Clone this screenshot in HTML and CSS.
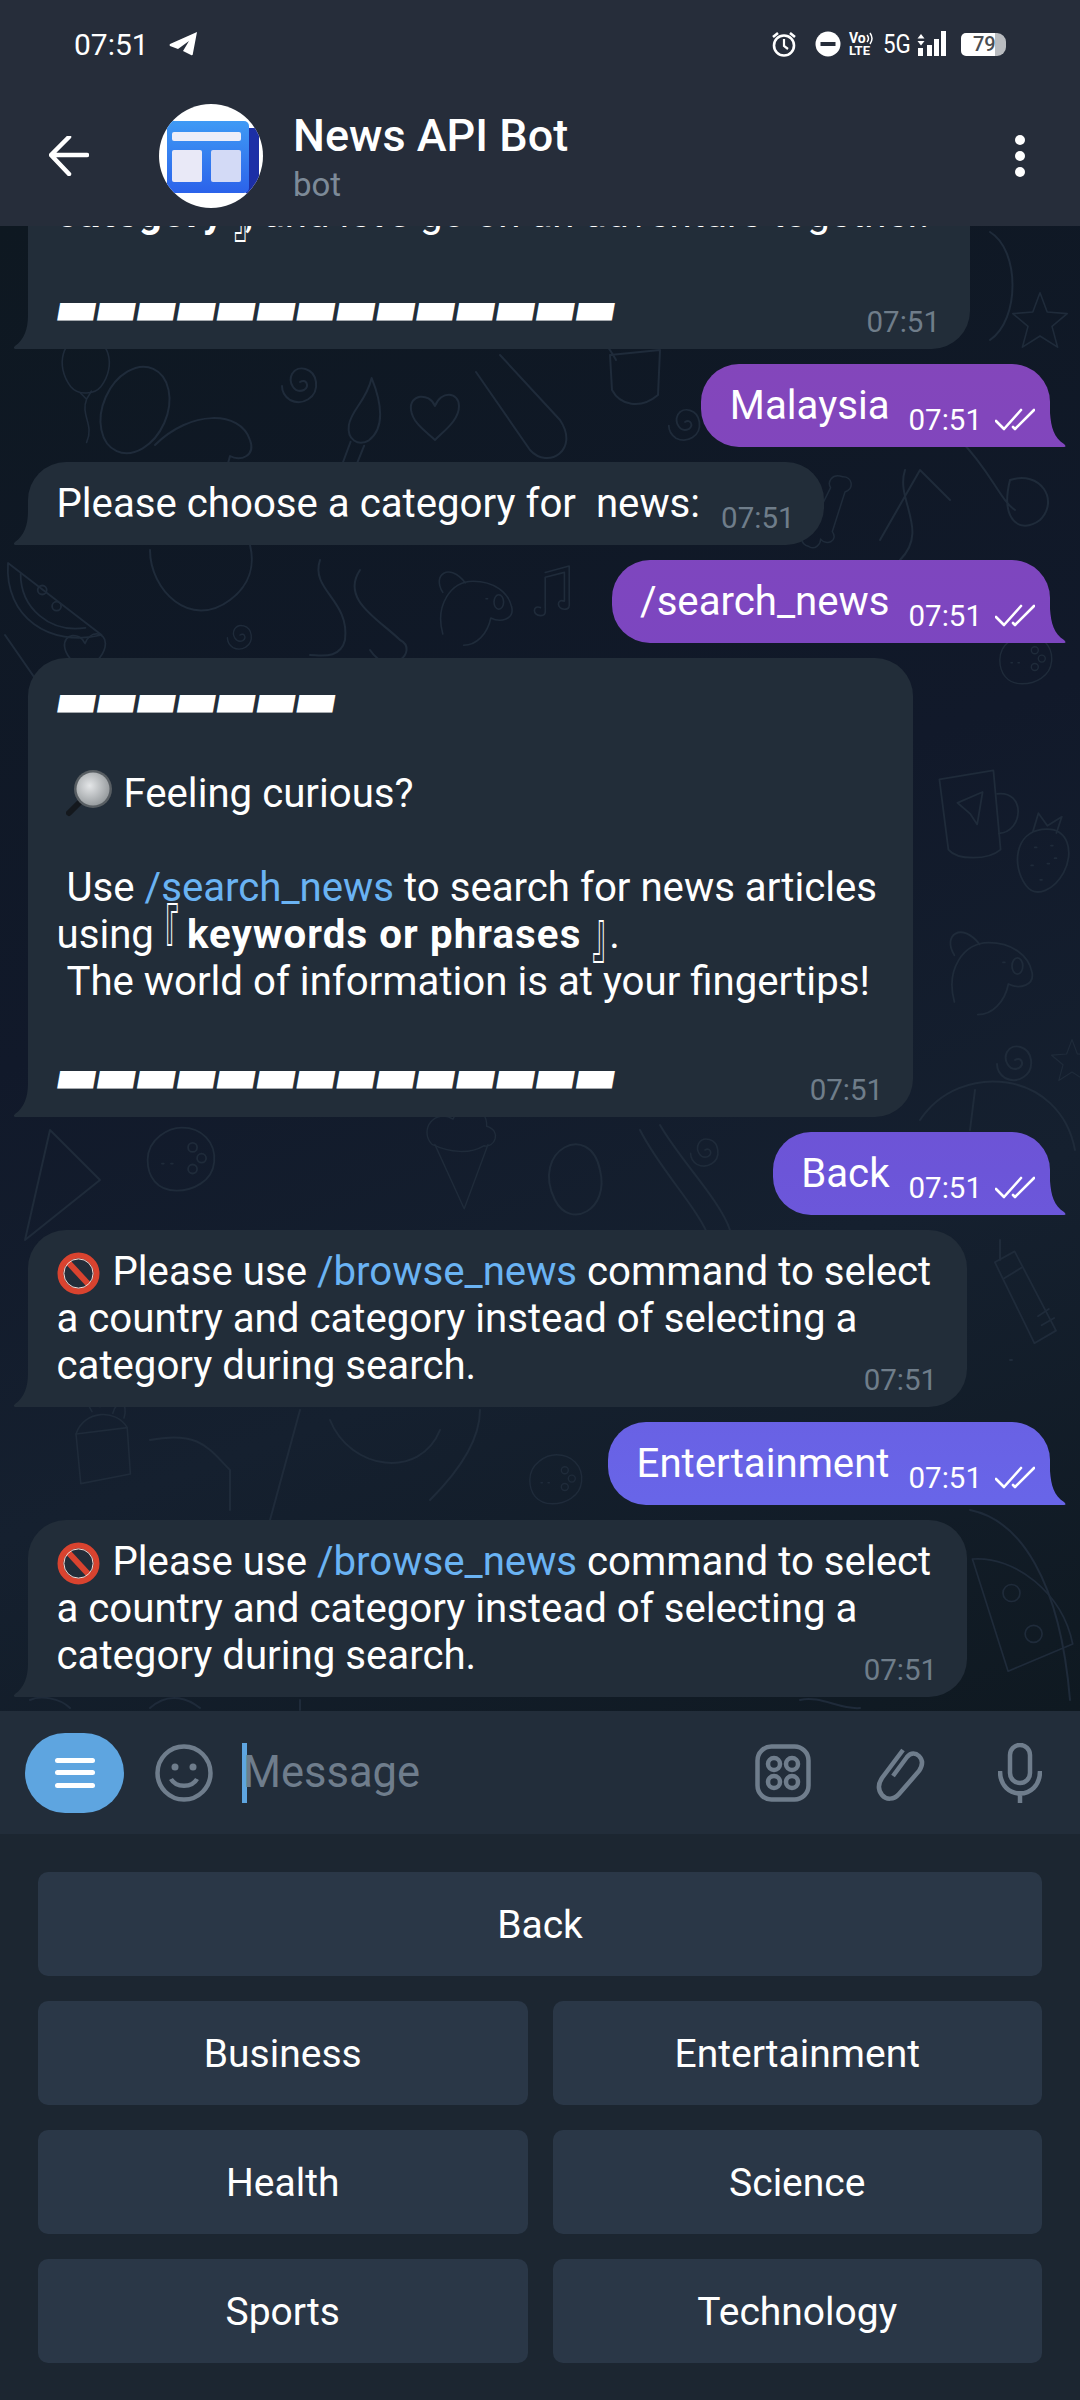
FILE: index.html
```html
<!DOCTYPE html>
<html lang="en">
<head>
    <meta charset="utf-8">
    <title>News API Bot</title>
    <link rel="stylesheet" href="styles.css">
</head>
<body>
<svg class="defs" width="0" height="0">
    <defs>
        <symbol id="ban" viewBox="0 0 43 43">
            <circle cx="21.5" cy="21.5" r="18" fill="none" stroke="#d9432f" stroke-width="6"/>
            <path d="M9 8 L34 35" stroke="#d9432f" stroke-width="6"/>
            <circle cx="21.5" cy="21.5" r="14.6" fill="none" stroke="#f3dcd6" stroke-width="1"/>
        </symbol>
        <symbol id="checks" viewBox="0 0 40 23">
            <path d="M1 13 L9 21 L26 2 M18 19 L20 21 L39 2" fill="none" stroke="#fff" stroke-width="2.6" stroke-linecap="round" stroke-linejoin="round"/>
        </symbol>
    </defs>
</svg>

<div class="app">
    <header class="topbar">
        <div class="status">
            <div class="status-left">
                <span class="clock">07:51</span>
                <svg class="plane" width="28" height="24" viewBox="0 0 28 24"><path d="M28 0 L1 12 Q0 13 1 14 L9 17 L20 9 L14 19 L22 23 Q24 24 24 21 Z" fill="#fff"/></svg>
            </div>
            <div class="status-right">
                <svg width="26" height="26" viewBox="0 0 26 26"><circle cx="13" cy="14.500" r="10" fill="none" stroke="#fff" stroke-width="2.600"/><path d="M13 8 V15 L17 18" fill="none" stroke="#fff" stroke-width="2.200"/><path d="M2 6 L7 2 M24 6 L19 2" stroke="#fff" stroke-width="2.600"/></svg>
                <svg class="dnd" width="26" height="26" viewBox="0 0 26 26"><circle cx="13" cy="13" r="12.500" fill="#fff"/><rect x="5.500" y="11" width="15" height="4" fill="#262d3a"/></svg>
                <div class="volte">
                    <span class="vo">Vo<svg width="8" height="13" viewBox="0 0 8 13"><path d="M1 3 Q4 6.500 1 10 M4 1 Q8 6.500 4 12" fill="none" stroke="#fff" stroke-width="1.500"/></svg></span>
                    <span class="lte">LTE</span>
                </div>
                <span class="net">5G</span>
                <svg class="signal" width="29" height="26" viewBox="0 0 29 26"><path d="M4 3 L7.500 7.500 H.5 Z M.5 10 H7.500 L4 14.500 Z" fill="#fff"/><rect x="1" y="17" width="5" height="8" fill="#fff"/><rect x="10" y="14" width="5" height="11" fill="#fff"/><rect x="17" y="8" width="5" height="17" fill="#fff"/><rect x="24" y="0" width="5" height="25" fill="#fff"/></svg>
                <div class="battery">79</div>
            </div>
        </div>
        <div class="chat-head">
            <svg class="back" width="40" height="40" viewBox="0 0 40 40"><path d="M38 19 H3 M20 1 L2 19 L20 38" fill="none" stroke="#fff" stroke-width="4.500" stroke-linecap="round" stroke-linejoin="round"/></svg>
            <svg class="avatar" width="104" height="104" viewBox="0 0 104 104">
                <defs>
                    <linearGradient id="paper" x1="0" y1="0" x2="0" y2="1"><stop offset="0" stop-color="#3f9af5"/><stop offset="1" stop-color="#2b62ea"/></linearGradient>
                    <clipPath id="round"><circle cx="52" cy="52" r="52"/></clipPath>
                </defs>
                <circle cx="52" cy="52" r="52" fill="#fff"/>
                <g clip-path="url(#round)">
                    <rect x="86" y="24" width="14" height="66" rx="4" fill="#1c2fa6"/>
                    <rect x="8" y="17" width="82" height="72" rx="5" fill="url(#paper)"/>
                    <rect x="13" y="28" width="69" height="9" rx="2" fill="#eeeef9"/>
                    <rect x="13" y="46" width="30" height="32" rx="2" fill="#e9e9f7"/>
                    <rect x="52" y="46" width="30" height="32" rx="2" fill="#d3daf6"/>
                </g>
            </svg>
            <div class="chat-title">
                <div class="chat-name">News API Bot</div>
                <div class="chat-sub">bot</div>
            </div>
            <svg class="more" width="12" height="44" viewBox="0 0 12 44"><circle cx="6" cy="6" r="5" fill="#fff"/><circle cx="6" cy="22" r="5" fill="#fff"/><circle cx="6" cy="38" r="5" fill="#fff"/></svg>
        </div>
    </header>

    <main class="chat">
        <svg class="wallpaper" viewBox="0 226 1080 1485" preserveAspectRatio="none">
            <defs>
                <path id="d-heart" d="M0 10 C-6 -4 -26 -2 -24 14 C-22 28 -8 36 0 44 C10 34 24 24 24 10 C24 -4 6 -6 0 10 Z"/>
                <path id="d-spiral" d="M0 0 C6 -4 10 4 4 8 C-6 12 -12 0 -8 -8 C-2 -18 14 -14 16 0 C18 16 2 24 -10 18 C-16 14 -18 8 -18 4"/>
                <path id="d-star" d="M0 -34 L9 -10 L34 -8 L15 8 L22 34 L0 20 L-22 34 L-15 8 L-34 -8 L-9 -10 Z"/>
                <path id="d-note" d="M-12 22 C-22 18 -22 32 -12 32 C-4 32 -6 26 -6 20 V-16 L18 -22 V14 C8 10 8 24 18 24 C26 24 24 18 24 12 V-30 L-6 -22"/>
                <g id="d-brush"><path d="M10 -70 C24 -46 30 -22 16 -8 C6 0 -6 -6 -6 -20 C-6 -36 8 -46 10 -70 Z"/><path d="M-2 -4 L-16 60 M12 -2 L-4 62"/></g>
                <g id="d-balloon"><path d="M0 -44 C30 -44 40 -8 20 18 C12 28 -8 30 -18 18 C-38 -8 -28 -44 0 -44 Z"/><path d="M-6 26 L2 34 L8 24 M2 34 C-6 54 12 66 2 88"/></g>
                <g id="d-cup"><path d="M-34 -34 L26 -44 L34 44 C20 56 -14 56 -24 44 Z"/><path d="M30 -18 C62 -22 60 24 32 26"/><path d="M-14 -8 L14 -20 L8 16 L0 4 Z"/></g>
                <g id="d-berry"><path d="M0 -34 C30 -38 36 -8 24 14 C14 32 -6 44 -18 28 C-34 6 -30 -30 0 -34 Z"/><path d="M-10 -32 L-4 -52 L6 -38 L22 -48 L16 -30"/><path d="M-8 -14 h2 M10 -16 h2 M-12 6 h2 M6 4 h2 M14 -2 h2 M-2 22 h2"/></g>
                <g id="d-bone"><path d="M-34 -36 C-44 -24 -34 -14 -26 -16 L18 30 C16 42 30 50 38 38 C46 32 40 22 34 20 C46 16 44 -2 30 2 L-14 -32 C-14 -46 -30 -48 -34 -36 Z"/></g>
                <g id="d-flash"><path d="M-28 -42 L-6 -54 L40 34 L16 48 Z"/><path d="M-18 -24 L2 -36 M20 18 L32 10 M24 28 L38 20"/></g>
                <g id="d-pad"><path d="M-36 0 C-36 -24 -12 -36 2 -36 C24 -36 40 -20 38 2 C36 24 14 34 -4 34 C-26 34 -36 18 -36 0 Z"/><circle cx="14" cy="-14" r="5"/><circle cx="14" cy="10" r="5"/><circle cx="24" cy="-2" r="5"/><path d="M-20 4 h2 M-10 4 h2"/></g>
                <g id="d-pizza"><path d="M-56 -60 C-6 -64 50 -20 62 40 L-14 72 Z"/><circle cx="-10" cy="-20" r="10"/><circle cx="16" cy="28" r="10"/></g>
                <g id="d-dog"><path d="M-34 30 C-44 -6 -24 -36 4 -36 C30 -36 48 -22 52 -4 C56 12 38 16 26 10 C22 30 8 44 -8 44"/><path d="M-6 -34 C-26 -60 -48 -44 -34 -22 M20 -14 h2"/><ellipse cx="36" cy="-10" rx="6" ry="9"/></g>
                <g id="d-melon"><path d="M-60 -30 C-64 30 -14 64 44 50 Z"/><path d="M-46 -18 C-46 20 -14 48 26 42"/><circle cx="-22" cy="0" r="5"/><circle cx="-6" cy="18" r="5"/></g>
                <g id="d-cake"><path d="M-30 -20 L34 -28 L38 30 L-24 42 Z"/><path d="M-30 -20 C-20 -50 20 -52 34 -28"/><path d="M-10 -48 C-24 -70 -4 -74 0 -54 M16 -46 C22 -66 36 -60 30 -40"/></g>
                <g id="d-ice"><path d="M-36 -8 L6 84 L40 -8"/><path d="M-40 -8 C-60 -30 -34 -60 -10 -44 C0 -70 40 -64 38 -34 C60 -28 50 -2 34 -6 C14 6 -14 4 -40 -8 Z"/></g>
            </defs>
            <g class="doodles">
                <use href="#d-balloon" transform="translate(85 372) scale(.8)"/>
                <use href="#d-heart" transform="translate(435 396)"/>
                <use href="#d-spiral" transform="translate(300 382)"/>
                <use href="#d-spiral" transform="translate(685 422) scale(.9)"/>
                <use href="#d-brush" transform="translate(352 446) rotate(8)"/>
                <ellipse cx="135" cy="410" rx="32" ry="45" transform="rotate(24 135 410)"/>
                <path d="M155 445 C190 410 240 410 250 440 C256 456 240 462 230 456 C222 490 200 500 180 498"/>
                <path d="M500 355 L560 420 C580 450 548 470 530 450 L476 372"/>
                <path d="M610 355 L660 350 L658 395 C640 410 620 405 612 390 Z M590 345 C600 330 610 350 616 360"/>
                <use href="#d-star" transform="translate(1040 320) scale(.8)"/>
                <path d="M990 232 C1020 250 1020 320 990 340"/>
                <use href="#d-bone" transform="translate(826 510) rotate(70) scale(.75)"/>
                <path d="M905 470 C895 500 930 530 900 560 M880 540 L920 470 L950 500"/>
                <path d="M1010 480 C1040 470 1060 500 1040 520 C1020 535 1000 520 1010 480 Z M960 440 C990 470 1000 500 1015 510"/>
                <use href="#d-melon" transform="translate(62 590) scale(.9)"/>
                <path d="M150 550 C150 590 190 630 230 600 C250 585 255 565 250 545"/>
                <path d="M320 560 C310 590 350 600 345 640 C340 660 320 655 310 655"/>
                <use href="#d-dog" transform="translate(470 610) scale(.8)"/>
                <use href="#d-note" transform="translate(550 590) scale(.8)"/>
                <use href="#d-heart" transform="translate(85 635) scale(.85)"/>
                <use href="#d-spiral" transform="translate(240 635) scale(.7)"/>
                <path d="M5 635 L50 700"/>
                <path d="M360 570 C340 600 380 620 400 640 C420 650 390 680 370 650"/>
                <use href="#d-pad" transform="translate(1025 660) scale(.7)"/>
                <use href="#d-cup" transform="translate(970 810) scale(.9)"/>
                <use href="#d-berry" transform="translate(1042 860) scale(.9)"/>
                <use href="#d-dog" transform="translate(985 975) scale(.9)"/>
                <use href="#d-spiral" transform="translate(1015 1060)"/>
                <use href="#d-star" transform="translate(1072 1060) scale(.6)"/>
                <path d="M920 1120 C960 1060 1060 1070 1075 1150 M975 1090 L970 1130"/>
                <path d="M50 1130 L25 1240 L100 1180 Z"/>
                <use href="#d-pad" transform="translate(180 1160) scale(.9)"/>
                <use href="#d-ice" transform="translate(460 1150) scale(.7)"/>
                <path d="M640 1130 C660 1170 700 1210 710 1240 M660 1125 C680 1160 720 1200 730 1230"/>
                <path d="M555 1200 C530 1150 590 1120 600 1170 C610 1210 570 1230 555 1200"/>
                <use href="#d-spiral" transform="translate(705 1150) scale(.8)"/>
                <use href="#d-flash" transform="translate(1020 1300) scale(.9)"/>
                <path d="M1000 1240 v20 M1010 1360 h2"/>
                <use href="#d-cake" transform="translate(100 1450) scale(.8)"/>
                <path d="M150 1440 C200 1430 210 1450 230 1470 V1510 M300 1410 L270 1520"/>
                <use href="#d-pad" transform="translate(555 1480) scale(.7)"/>
                <path d="M330 1420 C350 1470 420 1480 440 1430 M430 1500 C460 1470 480 1440 480 1410"/>
                <use href="#d-pizza" transform="translate(1020 1610) scale(.85)"/>
                <path d="M970 1510 C1020 1520 1060 1580 1070 1700"/>
                <path d="M30 1700 C40 1695 60 1698 70 1708 M150 1708 C170 1690 190 1700 200 1708 M300 1700 v10 M800 1700 C820 1695 840 1710 860 1708"/>
            </g>
        </svg>

        <article class="bubble in multi first">
            <div class="text"><b>category</b> <span class="br-close">』</span>, and let's go on an adventure together.

<span class="rule">▬▬▬▬▬▬▬▬▬▬▬▬▬▬</span></div>
            <span class="meta">07:51</span>
        </article>

        <article class="bubble out"><div class="text">Malaysia</div><span class="meta">07:51<svg width="40" height="23"><use href="#checks"/></svg></span></article>

        <article class="bubble in"><div class="text">Please choose a category for  news:</div><span class="meta">07:51</span></article>

        <article class="bubble out"><div class="text">/search_news</div><span class="meta">07:51<svg width="40" height="23"><use href="#checks"/></svg></span></article>

        <article class="bubble in multi">
            <div class="text"><span class="rule">▬▬▬▬▬▬▬</span>

 <svg class="emoji" width="47" height="47" viewBox="0 0 47 47"><defs><radialGradient id="lens" cx=".4" cy=".4" r=".7"><stop offset="0" stop-color="#e4e6e8"/><stop offset="1" stop-color="#8e9396"/></radialGradient></defs><path d="M15 31 L3 43" stroke="#14181d" stroke-width="6" stroke-linecap="round"/><circle cx="27" cy="19" r="19" fill="#585e63"/><circle cx="27" cy="19" r="16.500" fill="url(#lens)"/></svg> Feeling curious?

 Use <a class="cmd">/search_news</a> to search for news articles
using <span class="br-open">『</span> <b>keywords or phrases</b> <span class="br-close">』</span>.
 The world of information is at your fingertips!

<span class="rule">▬▬▬▬▬▬▬▬▬▬▬▬▬▬</span></div>
            <span class="meta">07:51</span>
        </article>

        <article class="bubble out"><div class="text">Back</div><span class="meta">07:51<svg width="40" height="23"><use href="#checks"/></svg></span></article>

        <article class="bubble in multi">
            <div class="text"><svg class="emoji ban" width="43" height="43"><use href="#ban"/></svg> Please use <a class="cmd">/browse_news</a> command to select
a country and category instead of selecting a
category during search.</div>
            <span class="meta">07:51</span>
        </article>

        <article class="bubble out"><div class="text">Entertainment</div><span class="meta">07:51<svg width="40" height="23"><use href="#checks"/></svg></span></article>

        <article class="bubble in multi">
            <div class="text"><svg class="emoji ban" width="43" height="43"><use href="#ban"/></svg> Please use <a class="cmd">/browse_news</a> command to select
a country and category instead of selecting a
category during search.</div>
            <span class="meta">07:51</span>
        </article>
    </main>

    <div class="inputbar">
        <div class="menu-btn">
            <span></span><span></span><span></span>
        </div>
        <svg class="ic smile" width="58" height="58" viewBox="0 0 58 58"><circle cx="29" cy="29" r="26.500"/><circle cx="20" cy="23" r="3.500" class="dot"/><circle cx="38" cy="23" r="3.500" class="dot"/><path d="M16 35 C21 44 37 44 42 35"/></svg>
        <div class="field"><span class="caret"></span><span class="placeholder">Message</span></div>
        <svg class="ic" width="56" height="58" viewBox="0 0 56 58"><rect x="2.500" y="2.500" width="51" height="53" rx="14"/><circle cx="19" cy="20" r="6"/><circle cx="37" cy="20" r="6"/><circle cx="19" cy="38" r="6"/><circle cx="37" cy="38" r="6"/></svg>
        <svg class="ic clip" width="50" height="58" viewBox="0 0 50 58"><path d="M17 32 L31 13 C35 8 40 9 43 12 C47 16 47 21 43 27 L23 50 C18 56 10 56 6 51 C2 46 2 40 6 34 L27 6"/></svg>
        <svg class="ic mic" width="44" height="60" viewBox="0 0 44 60"><rect x="12" y="2" width="20" height="38" rx="10"/><path d="M2 28 C2 58 42 58 42 28 M22 48 V60"/></svg>
    </div>

    <div class="keyboard">
        <button class="key wide">Back</button>
        <button class="key">Business</button>
        <button class="key">Entertainment</button>
        <button class="key">Health</button>
        <button class="key">Science</button>
        <button class="key">Sports</button>
        <button class="key">Technology</button>
    </div>
</div>
</body>
</html>
```

FILE: styles.css
```css
* {
    box-sizing: border-box;
}
html, body {
    margin: 0;
    padding: 0;
}
body {
    background: #1c2631;
    color: #fff;
    font-family: Roboto, "Noto Sans", sans-serif;
}
.defs {
    display: block;
    height: 0;
}
.app {
    width: 1080px;
    height: 2400px;
    display: flex;
    flex-direction: column;
    overflow: hidden;
}

/* top bar */
.topbar {
    height: 226px;
    background: #262d3a;
    flex: none;
    position: relative;
    z-index: 2;
}
.status {
    height: 88px;
    padding: 0 74px;
    display: flex;
    align-items: center;
    justify-content: space-between;
}
.status-left {
    display: flex;
    align-items: center;
    gap: 20px;
}
.clock {
    font-size: 30px;
}
.status-right {
    display: flex;
    align-items: center;
}
.dnd {
    margin-left: 18px;
}
.volte {
    margin-left: 8px;
    width: 26px;
    display: flex;
    flex-direction: column;
    font-weight: 700;
    line-height: 12px;
}
.vo {
    font-size: 14px;
    display: flex;
    align-items: center;
}
.lte {
    font-size: 13px;
}
.net {
    font-size: 26px;
    margin-left: 8px;
    width: 26px;
    transform: scaleX(.86);
    transform-origin: left;
}
.signal {
    margin-left: 8px;
}
.battery {
    margin-left: 15px;
    width: 45px;
    height: 23px;
    border-radius: 5px 9px 9px 5px;
    background: linear-gradient(90deg, #fff 76%, #b9bcc0 76%);
    color: #4a4d52;
    font-size: 20px;
    font-weight: 500;
    line-height: 23px;
    padding-left: 12px;
}
.chat-head {
    height: 136px;
    display: flex;
    align-items: center;
    padding: 0 54px 0 49px;
}
.avatar {
    margin-left: 70px;
}
.chat-title {
    margin-left: 30px;
    margin-top: 6px;
    flex: 1;
}
.chat-name {
    font-size: 45px;
    font-weight: 500;
    line-height: 52px;
}
.chat-sub {
    font-size: 33px;
    line-height: 46px;
    color: #7d8a98;
}

/* chat */
.chat {
    flex: 1;
    min-height: 0;
    position: relative;
    overflow: hidden;
    display: flex;
    flex-direction: column;
    justify-content: flex-end;
    gap: 15px;
    padding: 0 30px 14px 28px;
    background: linear-gradient(160deg, #0e1821 0%, #11192a 45%, #15202f 70%, #0f1921 100%);
}
.wallpaper {
    position: absolute;
    inset: 0;
    width: 100%;
    height: 100%;
}
.doodles {
    fill: none;
    stroke: #1f2b3a;
    stroke-width: 2;
    stroke-linecap: round;
    stroke-linejoin: round;
}
.bubble {
    flex: none;
    position: relative;
    display: flex;
    align-items: flex-end;
    gap: 21px;
    padding: 18px 29px 18px 28.5px;
    font-size: 40.2px;
    line-height: 47px;
    border-radius: 38px;
    width: fit-content;
}
.bubble::before {
    content: "";
    position: absolute;
    bottom: 0;
    width: 16px;
    height: 34px;
}
.text {
    white-space: pre-wrap;
}
.in {
    background: #222d39;
    border-bottom-left-radius: 0;
}
.in::before {
    left: -14px;
    background: #222d39;
    clip-path: path("M14 0 C14 14 10 25 1 31 C-1 33 0 34 2 34 L14 34 Z");
}
.out {
    align-self: flex-end;
    border-bottom-right-radius: 0;
    gap: 19px;
    background: linear-gradient(180deg, #8546ba 300px, #7c46c0 650px, #6c55d8 1170px, #6865e8 1500px) fixed;
}
.out::before {
    right: -16px;
    background: linear-gradient(180deg, #8546ba 300px, #7c46c0 650px, #6c55d8 1170px, #6865e8 1500px) fixed;
    clip-path: path("M0 0 C1 14 4 25 14 31 C16 33 16 34 14 34 L0 34 Z");
}
.multi {
    display: grid;
    padding-right: 36px;
}
.multi > * {
    grid-area: 1 / 1;
}
.first {
    width: 942px;
}
.first .br-close {
    width: 11px;
}
.meta {
    font-size: 29.5px;
    line-height: 32px;
    color: #6f7d8a;
    white-space: nowrap;
    display: flex;
    align-items: center;
    gap: 13px;
    margin-bottom: -6.5px;
}
.multi .meta {
    justify-self: end;
    align-self: end;
    margin-right: -6px;
}
.out .meta {
    color: #fff;
    margin-right: -14px;
}
.rule {
    font-family: "DejaVu Sans", sans-serif;
    font-size: 47px;
    line-height: 0;
    letter-spacing: -4.5px;
    margin-left: -2px;
    display: inline-block;
    transform: translateY(3px) skewX(-10deg);
}
/* the corner brackets are narrow and tall in the app, noto sets them in a full em cell */
.br-open, .br-close {
    font-family: "Noto Sans CJK SC", sans-serif;
    font-size: 44px;
    line-height: 0;
    display: inline-block;
    width: 13px;
    white-space: nowrap;
    transform: scale(.65, 1.45);
}
.br-open {
    text-indent: -25px;
}
.br-close {
    text-indent: -3px;
    width: 18px;
}
.cmd {
    color: #6ab3f3;
}
.emoji {
    vertical-align: -2px;
    margin: -8px 0;
}
.ban {
    margin-right: 3px;
}
.bubble b {
    font-weight: 700;
    letter-spacing: 1.1px;
}

/* input row */
.inputbar {
    flex: none;
    height: 123px;
    background: #222d3a;
    display: flex;
    align-items: center;
    padding-left: 25px;
    position: relative;
}
.menu-btn {
    width: 99px;
    height: 80px;
    border-radius: 40px;
    background: #5ea5e0;
    display: flex;
    flex-direction: column;
    align-items: center;
    justify-content: center;
    gap: 7.5px;
}
.menu-btn span {
    width: 40px;
    height: 5px;
    border-radius: 3px;
    background: #fff;
}
.ic {
    fill: none;
    stroke: #6f7d8c;
    stroke-width: 4.5;
    flex: none;
}
.ic .dot {
    fill: #6f7d8c;
    stroke: none;
}
.smile {
    margin-left: 31px;
}
.field {
    flex: 1;
    margin-left: 29px;
    display: flex;
    align-items: center;
}
.caret {
    width: 5px;
    height: 60px;
    background: #5ea5e0;
    margin-right: -4px;
}
.placeholder {
    font-size: 43.5px;
    color: #6f7d8c;
}
.clip {
    margin-left: 65px;
}
.mic {
    margin-left: 72px;
    margin-right: 38px;
}

/* bot keyboard */
.keyboard {
    flex: none;
    height: 566px;
    background: #1c2631;
    padding: 38px 38px 0;
    display: grid;
    grid-template-columns: 1fr 1fr;
    grid-auto-rows: 104px;
    column-gap: 25px;
    row-gap: 25px;
}
.key {
    border: none;
    border-radius: 10px;
    background: #2a3747;
    color: #fff;
    font-family: Roboto, sans-serif;
    font-size: 39px;
    padding: 2px 0 0;
}
.wide {
    grid-column: span 2;
}
```
